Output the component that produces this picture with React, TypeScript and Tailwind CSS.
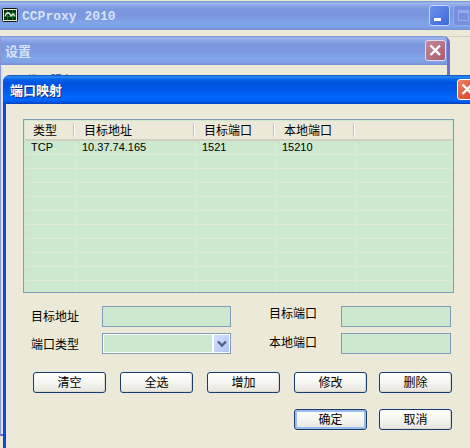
import type { ReactNode } from "react";

const columns = ["类型", "目标地址", "目标端口", "本地端口", ""];
const mappings = [["TCP", "10.37.74.165", "1521", "15210", ""]];
const emptyRows = Array.from({ length: 9 }, (_, i) => i);

function CloseIcon() {
  return (
    <svg viewBox="0 0 19 19" className="block h-full w-full" aria-hidden="true">
      <path d="M4.5 4.5 L14 14 M14 4.5 L4.5 14" stroke="#fff" strokeWidth="2.4" fill="none" />
    </svg>
  );
}

function PushButton({ children, primary = false }: { children: ReactNode; primary?: boolean }) {
  return (
    <button
      type="button"
      className={
        "h-[21px] w-[73px] rounded-[3px] border border-[#1c3c68] bg-linear-to-b from-white via-[#f5f5f1] to-[#e6e4dc] text-center text-[12px] leading-[18px] text-black " +
        (primary
          ? "shadow-[inset_0_0_0_2px_#9dbcf0,0_0_1px_#fff]"
          : "shadow-[inset_-1px_-1px_0_#dcd8cc,0_0_0_1px_#e2e8e8]")
      }
    >
      {children}
    </button>
  );
}

function Field({ id, label, offset, children }: { id: string; label: string; offset: string; children: ReactNode }) {
  return (
    <div className="flex justify-between">
      <label htmlFor={id} className={"text-[12px] leading-[16px] " + offset}>
        {label}
      </label>
      {children}
    </div>
  );
}

const inputStyle = "h-[21px] border border-[#7f9db9] bg-[#cce8cf] px-1 text-[12px] outline-none";
const fadedTitle =
  "bg-[linear-gradient(to_bottom,#7890d0_0px,#9db7ef_2px,#8fa9e8_4px,#7b98df_8px,#7b96df_15px,#80a5e8_22px,#80a2e8_26px,#788fd2_29px)]";

export default function App() {
  return (
    <main className="relative min-h-screen w-full overflow-hidden bg-[#ece9d8] font-['Liberation_Sans','Noto_Sans_CJK_SC',sans-serif] text-black">
      <section aria-label="CCProxy 2010">
        <header className={"mt-px flex h-[29px] items-center overflow-hidden pl-[2px] " + fadedTitle}>
          <svg width="16" height="15" viewBox="0 0 16 15" className="shrink-0" aria-hidden="true">
            <rect x="0.5" y="0.5" width="15" height="13" rx="1" fill="#e9ede0" stroke="#101810" />
            <rect x="2" y="2" width="12" height="10" fill="#073410" />
            <path d="M2 5.5H14M2 8.5H14M5.5 2V12M10.5 2V12" stroke="#15702a" />
            <path d="M3 8L5 5H7L9 8L11 6L13 8" fill="none" stroke="#e5f5df" strokeWidth="1.3" />
          </svg>
          <h1 className="ml-1 flex-1 pt-[2px] font-['Liberation_Mono',monospace] text-[13px] leading-[18px] font-bold text-[#d5e3fa]">
            CCProxy 2010
          </h1>
          <div className="-mr-1 flex shrink-0 gap-[3px]">
            <button type="button" aria-label="最小化" className="h-[21px] w-[21px] rounded-[3px] border border-[#c5d4f8] bg-linear-to-br from-[#6d91ec] to-[#3c66dc]">
              <span className="mt-[7px] ml-1 block h-[3px] w-[7px] bg-white" />
            </button>
            <button type="button" aria-label="最大化" className="h-[21px] w-[21px] rounded-[3px] border border-[#93abeb] bg-[#7690df]">
              <span className="ml-1 block h-[11px] w-[11px] border border-t-[3px] border-[#95aaea]" />
            </button>
          </div>
        </header>
        <div className="h-[7px] border-b border-[#d6d3c4]" />
      </section>

      <section
        aria-label="设置"
        className="absolute top-[36px] right-[20px] bottom-[12px] left-0 overflow-hidden rounded-tr-[7px] border-r-[3px] border-b-2 border-l border-r-[#6f72c8] border-b-[#6668cf] border-l-[#8796cc] bg-[#ece9d8]"
      >
        <header className={"flex h-[29px] items-center justify-between pr-px pl-1 " + fadedTitle}>
          <h2 className="pt-[2px] text-[13px] leading-[18px] font-bold text-[#d5e3fa]">设置</h2>
          <button type="button" aria-label="关闭" className="h-[21px] w-[21px] rounded-[3px] border border-[#dfdcec] bg-linear-to-br from-[#c28a9c] to-[#a95c6c]">
            <CloseIcon />
          </button>
        </header>
        <div className="h-full border-l-2 border-[#dfe1f2] pt-2 pl-[23px] text-[12px] leading-[16px] text-[#2450a8]">
          代理服务
        </div>
      </section>

      <section
        aria-label="端口映射"
        className="absolute top-[75px] right-[-13px] bottom-[-20px] left-[3px] rounded-t-[7px] border-x-[3px] border-[#0b4bd8] bg-[#ece9d8]"
      >
        <header className="-mx-[3px] flex h-[29px] items-center justify-between rounded-t-[7px] bg-[linear-gradient(to_bottom,#0c50b4_0px,#2f8cf8_2px,#0665ee_4px,#0053e0_8px,#0058ea_15px,#0068ff_22px,#0062f8_26px,#0040b8_29px)] pr-[5px] pl-[7px]">
          <h2 className="pt-[2px] text-[13px] leading-[18px] font-bold text-white [text-shadow:1px_1px_0_#0a2c80]">端口映射</h2>
          <button type="button" aria-label="关闭" className="h-[21px] w-[21px] rounded-[3px] border border-white bg-linear-to-br from-[#ec8266] to-[#d03a14]">
            <CloseIcon />
          </button>
        </header>

        <div className="pt-[15px] pr-[26px] pl-[17px]">
          <div className="border border-[#7f9db9] bg-[#cce8cf] p-px">
            <table className="w-full table-fixed border-separate border-spacing-0 text-left">
              <colgroup>
                <col className="w-[51px]" />
                <col className="w-[120px]" />
                <col className="w-[80px]" />
                <col className="w-[80px]" />
                <col />
              </colgroup>
              <thead>
                <tr className="h-[20px]">
                  {columns.map((name, i) => (
                    <th key={i} scope="col" className="border-b-2 border-[#d3d0c0] bg-[#ece9d8] p-0 align-middle text-[12px] font-normal">
                      <div
                        className={
                          "mr-px h-[14px] pl-2 leading-[16px] whitespace-nowrap " +
                          (i < 4 ? "border-r border-white shadow-[inset_-1px_0_0_#c7c5b2]" : "")
                        }
                      >
                        {name}
                      </div>
                    </th>
                  ))}
                </tr>
              </thead>
              <tbody>
                {mappings.map((row) => (
                  <tr key={row[3]} className="h-[14px]">
                    {row.map((cell, i) => (
                      <td
                        key={i}
                        className="border-r border-b border-[#e2e8d4] py-0 pr-0 pl-[6px] text-[11px] leading-[13px] last:border-r-0"
                      >
                        {cell}
                      </td>
                    ))}
                  </tr>
                ))}
                {emptyRows.map((row) => (
                  <tr key={row} className="h-[14px]">
                    {columns.map((_, i) => (
                      <td key={i} className="border-r border-b border-[#e2e8d4] p-0 last:border-r-0" />
                    ))}
                  </tr>
                ))}
                <tr className="h-[10px]">
                  {columns.map((_, i) => (
                    <td key={i} className="border-r border-[#e2e8d4] p-0 last:border-r-0" />
                  ))}
                </tr>
              </tbody>
            </table>
          </div>
        </div>

        <form className="pt-[13px] pr-[29px] pl-[25px]" onSubmit={(e) => e.preventDefault()}>
          <div className="flex justify-between">
            <div className="flex w-[200px] flex-col gap-[6px]">
              <Field id="target-address" label="目标地址" offset="pt-[3px]">
                <input id="target-address" type="text" className={"w-[129px] " + inputStyle} />
              </Field>
              <Field id="port-type" label="端口类型" offset="pt-1">
                <div className="relative h-[21px] w-[129px]">
                  <select
                    id="port-type"
                    defaultValue=""
                    className="block h-[21px] w-full appearance-none border border-[#7f9db9] bg-[#cce8cf] px-1 text-[12px] shadow-[inset_0_0_0_1px_#fff] outline-none"
                  >
                    <option value="" />
                    <option value="TCP">TCP</option>
                    <option value="UDP">UDP</option>
                  </select>
                  <span className="pointer-events-none absolute top-px right-px flex h-[19px] w-[18px] items-center justify-center border border-l-2 border-white bg-linear-to-br from-[#d3dffc] to-[#b0c5f6]">
                    <svg width="10" height="8" viewBox="0 0 10 8" aria-hidden="true">
                      <path d="M1 1.5L5 5.5L9 1.5" fill="none" stroke="#4d6185" strokeWidth="2.4" />
                    </svg>
                  </span>
                </div>
              </Field>
            </div>
            <div className="flex w-[182px] flex-col gap-[6px]">
              <Field id="target-port" label="目标端口" offset="pt-0">
                <input id="target-port" type="text" className={"w-[110px] " + inputStyle} />
              </Field>
              <Field id="local-port" label="本地端口" offset="pt-[2px]">
                <input id="local-port" type="text" className={"w-[110px] " + inputStyle} />
              </Field>
            </div>
          </div>

          <div className="-mr-px ml-[2px] flex justify-between pt-[18px]">
            <div className="flex gap-[14px]">
              <PushButton>清空</PushButton>
              <PushButton>全选</PushButton>
              <PushButton>增加</PushButton>
            </div>
            <div className="flex gap-3">
              <PushButton>修改</PushButton>
              <PushButton>删除</PushButton>
            </div>
          </div>
          <div className="-mr-px flex justify-end gap-3 pt-4">
            <PushButton primary>确定</PushButton>
            <PushButton>取消</PushButton>
          </div>
        </form>
      </section>
    </main>
  );
}
